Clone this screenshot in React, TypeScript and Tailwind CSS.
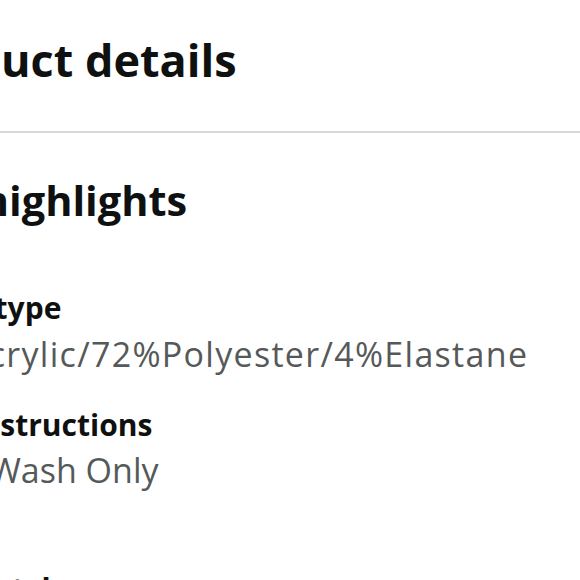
import React from "react";

export default function App() {
  return (
    <div className="w-[580px] h-[580px] overflow-hidden bg-white" style={{ fontFamily: '"Open Sans", "Noto Sans", sans-serif' }}>
      <div className="-ml-[104px] w-[800px]">
        <h1 className="pt-[32px] text-[45px] leading-[56px] font-bold text-[#0f1111] whitespace-nowrap">Product details</h1>
      </div>
      <div className="mt-[43px] h-[2px] bg-[#d5d9d9]" />
      <div className="-ml-[105px] w-[800px] text-[#0f1111]">
        <h2 className="mt-[41px] text-[41.5px] leading-[52px] font-bold whitespace-nowrap">Top highlights</h2>
        <div className="mt-[63px] text-[30px] leading-[38px] font-bold whitespace-nowrap">Fabric type</div>
        <div className="mt-[5px] text-[34px] leading-[44px] tracking-[1.3px] text-[#565959] whitespace-nowrap">24%Acrylic/72%Polyester/4%Elastane</div>
        <div className="mt-[30px] text-[30px] leading-[38px] font-bold whitespace-nowrap">Care instructions</div>
        <div className="mt-[4px] text-[34px] leading-[44px] text-[#565959] whitespace-nowrap">Hand Wash Only</div>
        <div className="mt-[78px] ml-[6px] text-[30px] leading-[38px] font-bold whitespace-nowrap">Collar style</div>
      </div>
    </div>
  );
}
